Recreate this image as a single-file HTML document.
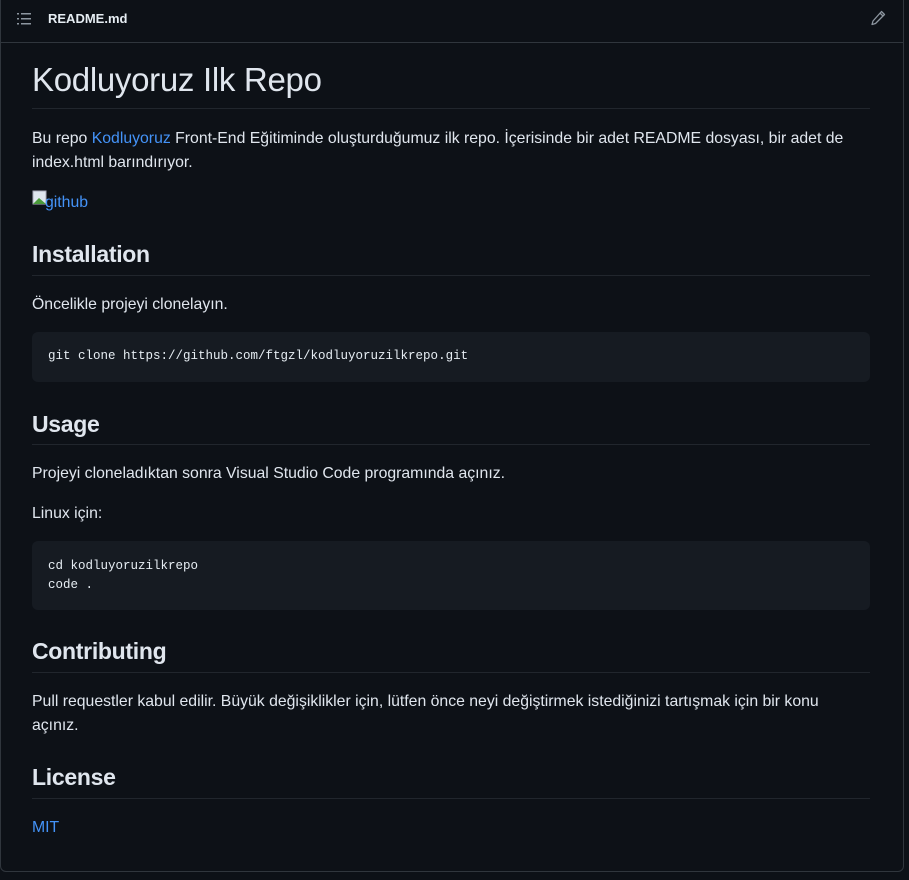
<!DOCTYPE html>
<html><head><meta charset="utf-8"><style>
*{margin:0;padding:0;box-sizing:border-box}
body{width:909px;height:880px;background:#0d1117;font-family:"Liberation Sans",sans-serif;color:#e6edf3;position:relative;overflow:hidden}
.box{position:absolute;left:0;top:-6px;width:904px;height:878px;border:1px solid #30363d;border-radius:6px}
.hdr{position:absolute;left:0;top:42px;width:903px;height:1px;background:#30363d}
.a{position:absolute;white-space:nowrap}
.p{font-size:15.8px;color:#e0e6ee}
.h2{font-size:23px;font-weight:bold;color:#e0e6ee;letter-spacing:-0.3px}
.hr{position:absolute;left:32px;width:838px;height:1px;background:#21262d}
.code{position:absolute;left:32px;width:838px;background:#161b22;border-radius:6px;font-family:"Liberation Mono",monospace;font-size:12.5px;color:#e6edf3;padding:0 16px;line-height:19px}
a,.l{color:#4493f8;text-decoration:none}
</style></head><body>
<div class="box"></div>
<svg class="a" style="left:16px;top:12px" width="16" height="14" viewBox="0 0 16 14"><g fill="#8d96a0"><rect x="1" y="1" width="2" height="1.5"/><rect x="1" y="6" width="2" height="1.5"/><rect x="1" y="11" width="2" height="1.5"/><rect x="5" y="1" width="10" height="1.5"/><rect x="5" y="6" width="10" height="1.5"/><rect x="5" y="11" width="10" height="1.5"/></g></svg>
<div class="a" style="left:48px;top:11px;font-size:13px;font-weight:bold;color:#e6edf3">README.md</div>
<svg class="a" style="left:870px;top:10px" width="16" height="16" viewBox="0 0 16 16"><path d="M11.5 1.5l3 3-9 9-3.5 1 1-3.5z M10 3l3 3" fill="none" stroke="#8d96a0" stroke-width="1.3" stroke-linejoin="round"/></svg>
<div class="hdr"></div>
<div class="a" style="left:32px;top:61px;font-size:33px;color:#e0e6ee;letter-spacing:-0.3px">Kodluyoruz Ilk Repo</div>
<div class="hr" style="top:108px"></div>
<div class="a p" style="left:32px;top:130px">Bu repo <span class="l">Kodluyoruz</span> Front-End Eğitiminde oluşturduğumuz ilk repo. İçerisinde bir adet README dosyası, bir adet de</div>
<div class="a p" style="left:32px;top:154px">index.html barındırıyor.</div>
<svg class="a" style="left:32px;top:190px" width="16" height="16"><rect x="1" y="1" width="13" height="13" fill="#dfe6ef" stroke="#aab"/><path d="M1 14L7 8l7 6z" fill="#4a9a3a"/></svg>
<div class="a p l" style="left:45px;top:194px">github</div>
<div class="a h2" style="left:32px;top:241px">Installation</div>
<div class="hr" style="top:275px"></div>
<div class="a p" style="left:32px;top:296px">Öncelikle projeyi clonelayın.</div>
<div class="code" style="top:332px;height:50px;padding-top:15px">git clone https://github.com/ftgzl/kodluyoruzilkrepo.git</div>
<div class="a h2" style="left:32px;top:411px">Usage</div>
<div class="hr" style="top:444px"></div>
<div class="a p" style="left:32px;top:465px">Projeyi cloneladıktan sonra Visual Studio Code programında açınız.</div>
<div class="a p" style="left:32px;top:505px">Linux için:</div>
<div class="code" style="top:541px;height:69px;padding-top:16px">cd kodluyoruzilkrepo<br>code .</div>
<div class="a h2" style="left:32px;top:638px">Contributing</div>
<div class="hr" style="top:672px"></div>
<div class="a p" style="left:32px;top:693px">Pull requestler kabul edilir. Büyük değişiklikler için, lütfen önce neyi değiştirmek istediğinizi tartışmak için bir konu</div>
<div class="a p" style="left:32px;top:717px">açınız.</div>
<div class="a h2" style="left:32px;top:764px">License</div>
<div class="hr" style="top:798px"></div>
<div class="a p l" style="left:32px;top:819px">MIT</div>
</body></html>
